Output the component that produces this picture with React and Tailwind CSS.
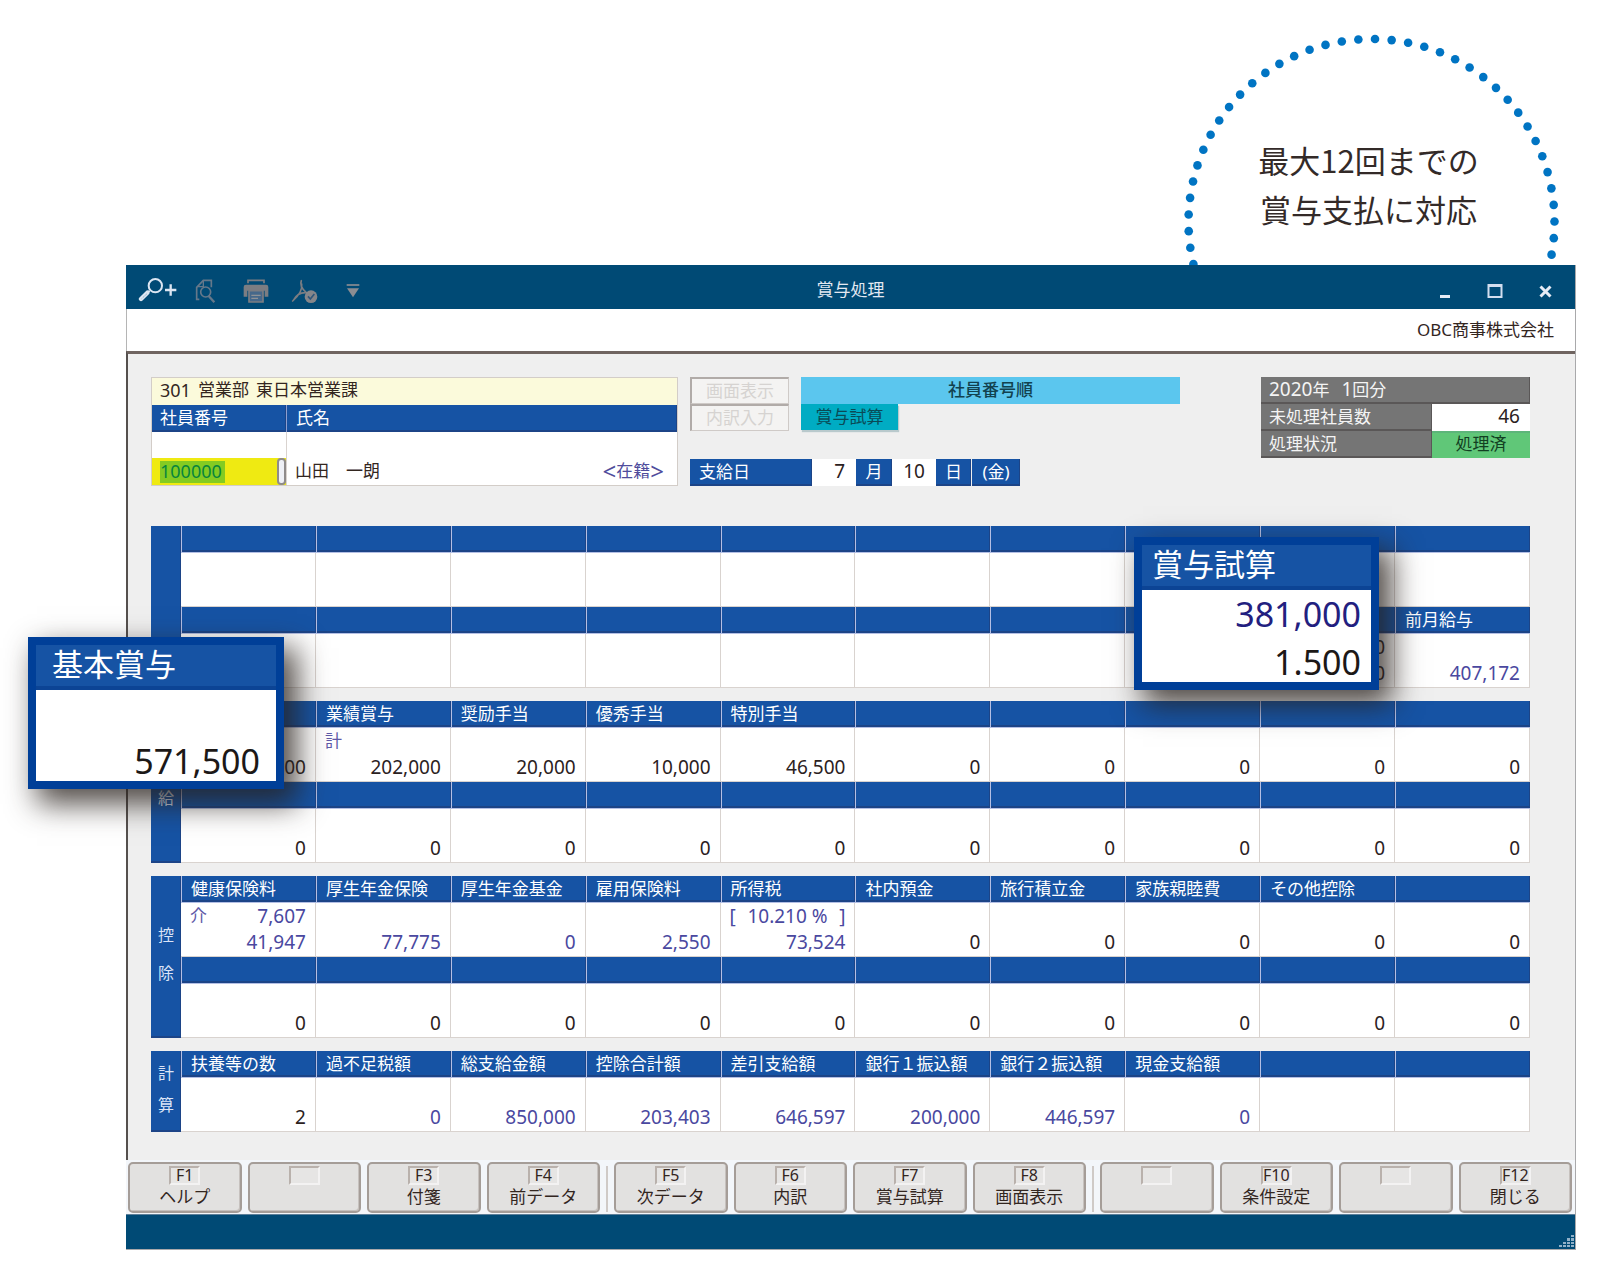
import React from "react";

const B = true;

const sections = [
  {
    side: [],
    rows: [
      { heads: Array(10).fill(""), cells: Array(10).fill({}) },
      {
        heads: ["", "", "", "", "", "", "", "", "", "前月給与"],
        cells: [...Array(8).fill({}), { top: ["", "0"], v: "0" }, { v: "407,172", b: B }],
      },
    ],
  },
  {
    side: ["", "給"],
    rows: [
      {
        heads: ["", "業績賞与", "奨励手当", "優秀手当", "特別手当", "", "", "", "", ""],
        cells: [
          { v: "00" },
          { top: ["計"], v: "202,000" },
          { v: "20,000" },
          { v: "10,000" },
          { v: "46,500" },
          ...Array(5).fill({ v: "0" }),
        ],
      },
      { heads: Array(10).fill(""), cells: Array(10).fill({ v: "0" }) },
    ],
  },
  {
    side: ["控", "除"],
    rows: [
      {
        heads: ["健康保険料", "厚生年金保険", "厚生年金基金", "雇用保険料", "所得税", "社内預金", "旅行積立金", "家族親睦費", "その他控除", ""],
        cells: [
          { top: ["介", "7,607"], v: "41,947", b: B },
          { v: "77,775", b: B },
          { v: "0", b: B },
          { v: "2,550", b: B },
          { top: ["[", "10.210 %", "]"], v: "73,524", b: B },
          ...Array(5).fill({ v: "0" }),
        ],
      },
      { heads: Array(10).fill(""), cells: Array(10).fill({ v: "0" }) },
    ],
  },
  {
    side: ["計", "算"],
    tight: true,
    rows: [
      {
        heads: ["扶養等の数", "過不足税額", "総支給金額", "控除合計額", "差引支給額", "銀行１振込額", "銀行２振込額", "現金支給額", "", ""],
        cells: [
          { v: "2" },
          { v: "0", b: B },
          { v: "850,000", b: B },
          { v: "203,403", b: B },
          { v: "646,597", b: B },
          { v: "200,000", b: B },
          { v: "446,597", b: B },
          { v: "0", b: B },
          {},
          {},
        ],
      },
    ],
  },
];

const keyGroups = [
  [["F1", "ヘルプ"], ["", ""], ["F3", "付箋"], ["F4", "前データ"]],
  [["F5", "次データ"], ["F6", "内訳"], ["F7", "賞与試算"], ["F8", "画面表示"]],
  [["", ""], ["F10", "条件設定"], ["", ""], ["F12", "閉じる"]],
];

const BLUE = "bg-[#1653a4] text-white shadow-[inset_-1px_-2px_0_#1c4487]";

function Cell({ cell }) {
  const top = cell.top || [];
  return (
    <td
      className={`h-[54px] border-r border-b border-[#d9d3cf] bg-white pr-[9px] pl-[9px] align-top text-[19px] leading-[26px] ${
        cell.b ? "text-[#4a48a0]" : "text-[#2b211e]"
      }`}
    >
      <div className="flex h-[26px] justify-between whitespace-nowrap">
        {top.map((t, i) => (
          <span key={i} className={/[計介]/.test(t) ? "text-[17px] text-[#5f5aa8]" : ""}>
            {t}
          </span>
        ))}
      </div>
      <div className="h-[27px] text-right">{cell.v}</div>
    </td>
  );
}

function Section({ section }) {
  return (
    <table className="w-full table-fixed border-separate border-spacing-0">
      <colgroup>
        <col className="w-[30px]" />
        {Array.from({ length: 10 }, (_, i) => (
          <col key={i} />
        ))}
      </colgroup>
      <tbody>
        {section.rows.map((row, r) => (
          <React.Fragment key={r}>
            <tr>
              {r === 0 && (
                <th
                  rowSpan={section.rows.length * 2}
                  scope="rowgroup"
                  className={`p-0 align-top text-[16px] font-normal ${BLUE}`}
                >
                  <div className={`flex flex-col items-center ${section.tight ? "gap-2 pt-[10px]" : "gap-[14px] pt-[47px]"}`}>
                    {section.side.map((s, i) => (
                      <span key={i} className="h-6 leading-6 text-[#dbe4f7]">
                        {s}
                      </span>
                    ))}
                  </div>
                </th>
              )}
              {row.heads.map((h, i) => (
                <th
                  key={i}
                  scope="col"
                  className={`h-[27px] border-l border-b border-[#b4bfe4] py-0 pr-0 pl-[9px] text-left text-[17px] leading-[26px] font-normal whitespace-nowrap ${BLUE}`}
                >
                  {h}
                </th>
              ))}
            </tr>
            <tr>
              {row.cells.map((c, i) => (
                <Cell key={i} cell={c} />
              ))}
            </tr>
          </React.Fragment>
        ))}
      </tbody>
    </table>
  );
}

function DottedArc() {
  const dots = Array.from({ length: 40 }, (_, i) => {
    const a = ((1.1 + (i - 20) * 5.22) * Math.PI) / 180;
    return [187.5 + 183 * Math.sin(a), 187 - 183 * Math.cos(a)];
  });
  return (
    <svg aria-hidden="true" width="376" height="236" viewBox="0 -4 376 236" className="absolute inset-0">
      {dots.map(([x, y], i) => (
        <circle key={i} cx={x} cy={y} r="4.3" fill="#0074c3" />
      ))}
    </svg>
  );
}

function ToolButton({ label, className, children, ...svg }) {
  return (
    <button type="button" aria-label={label} className={className}>
      <svg fill="none" {...svg}>
        {children}
      </svg>
    </button>
  );
}

function TitleBar() {
  return (
    <header className="grid h-11 grid-cols-[1fr_auto_1fr] items-center bg-[#004a75] text-[#e3e9f2]">
      <div className="flex items-center pt-2 pl-3">
        <ToolButton label="拡大" width="40" height="28" viewBox="52 51 120 84">
          <circle cx="104" cy="77" r="20" stroke="#dce6f2" strokeWidth="6" />
          <path d="M87 92L77 101" stroke="#dce6f2" strokeWidth="6" />
          <path d="M80 98L61 117" stroke="#dce6f2" strokeWidth="13" strokeLinecap="round" />
          <path d="M78 102L63 116" stroke="#7d9db8" strokeWidth="3" strokeDasharray="5 4" />
          <path d="M133 90h34M150 73v34" stroke="#dce6f2" strokeWidth="7" />
        </ToolButton>
        <ToolButton label="プレビュー" className="ml-4" width="22" height="26" viewBox="224 54 66 78" stroke="#65788a" strokeWidth="5">
          <path d="M276 82V61H252L232 82V118H240" />
          <path d="M252 61V80H234" strokeWidth="4" />
          <circle cx="259" cy="96" r="15" />
          <path d="M268 108L285 127" strokeWidth="7" />
        </ToolButton>
        <ToolButton label="印刷" className="ml-[26px]" width="28" height="26" viewBox="366 54 84 78">
          <path d="M384 70V61H432V70" stroke="#7b7d82" strokeWidth="5" />
          <path d="M378 74H438Q445 74 445 81V110H434V92H382V110H371V81Q371 74 378 74Z" fill="#7b7d82" />
          <path d="M387 92H429V126H387Z" fill="#46688a" stroke="#7b7d82" strokeWidth="5" />
          <path d="M394 106H422M394 115H414" stroke="#8f9296" strokeWidth="4" />
        </ToolButton>
        <ToolButton label="PDF" className="ml-[21px]" width="28" height="26" viewBox="512 54 84 78">
          <path d="M543 62C539 72 544 86 558 98C542 97 527 106 519 121M544 72C547 90 534 108 517 123" stroke="#7b7d82" strokeWidth="5" strokeLinecap="round" />
          <circle cx="572" cy="110" r="19" fill="#85868a" />
          <path d="M563 109L570 117L582 102" stroke="#31577a" strokeWidth="5" />
        </ToolButton>
        <ToolButton label="その他" className="ml-[26px]" width="16" height="16" viewBox="674 66 48 48">
          <path d="M679 72H717" stroke="#8b8d92" strokeWidth="5" />
          <path d="M680 82H716L698 109Z" fill="#8b8d92" />
        </ToolButton>
      </div>
      <h1 className="pt-[6px] text-[17px] leading-6">賞与処理</h1>
      <div className="flex items-center justify-end gap-9 pt-2 pr-[23px]">
        <ToolButton label="最小化" width="12" height="16" viewBox="0 0 12 16">
          <path d="M1 13.500h10" stroke="#e6ebf5" strokeWidth="3" />
        </ToolButton>
        <ToolButton label="最大化" width="16" height="16" viewBox="0 0 16 16">
          <path d="M1.500 2h13v12h-13z" stroke="#d3deef" strokeWidth="2" />
          <path d="M1 2.500h14" stroke="#d3deef" strokeWidth="3" />
        </ToolButton>
        <ToolButton label="閉じる" width="13" height="16" viewBox="0 0 13 16">
          <path d="M1.500 3.500l10 10M11.500 3.500l-10 10" stroke="#e6ebf5" strokeWidth="3" />
        </ToolButton>
      </div>
    </header>
  );
}

function EmployeePanel() {
  return (
    <div className="border border-[#d3cdc8] bg-white text-[17px] leading-[25px] text-[#33261f]">
      <div className="flex h-[27px] gap-[7px] bg-[#fbfadb] pl-2 leading-6">
        <span className="text-[18px]">301</span>
        <span>営業部</span>
        <span>東日本営業課</span>
      </div>
      <div className="flex">
        <div className={`h-[27px] w-[135px] border-r border-r-[#8d9fd0] pl-2 ${BLUE}`}>
          <label htmlFor="emp-no">社員番号</label>
        </div>
        <div className={`h-[27px] flex-1 pl-[9px] ${BLUE}`}>氏名</div>
      </div>
      <div className="flex h-[53px] items-end">
        <div className="flex h-full w-[135px] flex-col justify-end border-r border-[#d9d3cf]">
          <div className="flex h-[27px] items-center justify-between bg-[#efea12] pl-2">
            <input
              id="emp-no"
              defaultValue="100000"
              className="h-[22px] w-[65px] bg-[#84cb22] pb-[2px] text-[18px] leading-5 text-[#08853d] outline-none"
            />
            <button type="button" aria-label="検索" className="h-[27px] w-[9px] rounded-[4px] border-2 border-[#8f8b8b] bg-[#eef0f6]" />
          </div>
        </div>
        <div className="flex h-[27px] flex-1 justify-between pr-[13px] pl-2">
          <span>山田　一朗</span>
          <span className="flex text-[#4f4c9c]">
            <span className="text-[24px]">&lt;</span>
            在籍
            <span className="text-[24px]">&gt;</span>
          </span>
        </div>
      </div>
    </div>
  );
}

function DisabledButton({ children }) {
  return (
    <button
      type="button"
      disabled
      className="h-[27px] w-[99px] border border-t-2 border-l-2 border-[#cfcac7] border-t-[#b1aba8] border-l-[#b1aba8] bg-[#f4f3f2] text-[17px] leading-[22px] text-[#d6d3d1]"
    >
      {children}
    </button>
  );
}

function DatePanel() {
  return (
    <div className="flex flex-col justify-between">
      <div>
        <div className="flex gap-3">
          <DisabledButton>画面表示</DisabledButton>
          <div className="h-[27px] w-[379px] bg-[#5bc6ee] text-center text-[17px] leading-[25px] font-medium text-[#12424f]">社員番号順</div>
        </div>
        <div className="flex gap-3">
          <DisabledButton>内訳入力</DisabledButton>
          <button type="button" className="h-[26px] w-[97px] bg-[#00acc3] text-[17px] leading-[24px] text-[#0a4a55] shadow-[1px_2px_1px_#b9c9cc]">
            賞与試算
          </button>
        </div>
      </div>
      <div className="flex h-[27px] text-[17px] leading-[25px]">
        <div className={`w-[122px] pl-[9px] ${BLUE}`}>支給日</div>
        <input aria-label="月" defaultValue="7" className="w-11 bg-white pr-[11px] pb-[2px] text-right text-[19px] text-[#2b211e]" />
        <div className={`w-9 text-center ${BLUE}`}>月</div>
        <input aria-label="日" defaultValue="10" className="w-11 bg-white pr-[11px] pb-[2px] text-right text-[19px] text-[#2b211e]" />
        <div className={`w-[35px] text-center ${BLUE}`}>日</div>
        <div className={`ml-px w-12 text-center ${BLUE}`}>(金)</div>
      </div>
    </div>
  );
}

function StatusPanel() {
  const grey = "bg-[#757575] text-[#f4f4f4] shadow-[inset_-1px_-2px_0_#5a5757]";
  return (
    <dl className="grid grid-cols-[171fr_98fr] grid-rows-[27px_27px_27px] content-start text-[17px] leading-[25px]">
      <div className={`flex col-span-2 pl-2 ${grey}`}>
        <span className="text-[19px]">2020</span>年<span className="pl-3 text-[19px]">1</span>回分
      </div>
      <dt className={`pl-2 ${grey}`}>未処理社員数</dt>
      <dd className="bg-white pr-[10px] text-right text-[19px] text-[#2b211e]">46</dd>
      <dt className={`pl-2 ${grey}`}>処理状況</dt>
      <dd className="border-t-2 border-[#5db57a] bg-[#60c778] text-center leading-[21px] text-[#123f22]">処理済</dd>
    </dl>
  );
}

function FunctionKey({ code, label }) {
  return (
    <button
      type="button"
      className="flex h-[51px] min-w-0 flex-1 flex-col items-center rounded-[5px] border-2 border-[#a59d98] bg-[#e2e1e0] pt-[2px] text-[#33261f] shadow-[inset_-1px_-1px_0_#c6c1be]"
    >
      <span className="h-[19px] min-w-[31px] border-2 border-t-[#b9b1ac] border-r-[#f3f2f2] border-b-[#f3f2f2] border-l-[#b9b1ac] bg-[#e6e5e4] text-[16px] leading-[14px]">
        {code}
      </span>
      <span className="text-[17px] leading-6 whitespace-nowrap">{label}</span>
    </button>
  );
}

function Callout({ title, className, children }) {
  return (
    <div
      className={`absolute flex flex-col border-8 border-[#003f98] bg-white shadow-[11px_13px_28px_2px_rgba(40,32,28,0.8)] ${className}`}
    >
      <div className="h-[45px] border-b-4 border-[#0c4495] bg-[#1653a4] text-[31px] leading-[38px] text-white">{title}</div>
      <div className="flex flex-1 flex-col justify-end gap-2 text-right text-[34px] leading-10">{children}</div>
    </div>
  );
}

export default function App() {
  return (
    <main className="min-h-screen bg-white pr-[27px] pl-[126px] font-['Noto_Sans','Noto_Sans_CJK_JP',sans-serif]">
      <div className="flex h-[265px] justify-end pt-[31px] pr-[16px]">
        <div className="relative w-[376px] overflow-hidden pt-[104px]">
          <DottedArc />
          <p className="relative pr-[7px] text-center font-['Noto_Sans_CJK_JP',sans-serif] text-[31px] leading-[49px] text-[#332a28]">
            最大12回までの
            <br />
            賞与支払に対応
          </p>
        </div>
      </div>

      <div className="relative">
        <div className="border-r border-b border-[#a9a9ab] bg-[#efefef]">
          <TitleBar />
          <div className="h-[42px] border-l border-[#b5b5b5] bg-white pr-[21px] text-right text-[17px] leading-[42px] text-[#33261f]">OBC商事株式会社</div>
          <div className="border-t-[3px] border-l-2 border-t-[#6f6460] border-l-[#55504e] pr-[45px] pb-7 pl-[23px]">
            <div className="grid grid-cols-[527fr_559fr_269fr] gap-3 pt-[23px]">
              <EmployeePanel />
              <DatePanel />
              <StatusPanel />
            </div>
            <div className="mt-10 flex flex-col gap-[13px]">
              {sections.map((s, i) => (
                <Section key={i} section={s} />
              ))}
            </div>
          </div>

          <nav aria-label="ファンクションキー" className="flex h-[54px] gap-[14px] bg-[#f3f6fa] pt-[2px] pr-[3px] pl-[2px]">
            {keyGroups.map((g, i) => (
              <div key={i} className="relative flex flex-1 gap-[6px]">
                {i > 0 && <span className="absolute top-1 -left-2 h-[46px] w-[2px] bg-[#cfcac7]" />}
                {g.map(([code, label], k) => (
                  <FunctionKey key={k} code={code} label={label} />
                ))}
              </div>
            ))}
          </nav>
          <footer className="flex h-[35px] items-end justify-end border-t border-[#5d7f99] bg-[#004a75] pr-[1px] pb-[1px]">
            <svg aria-hidden="true" width="16" height="14" viewBox="0 0 16 14" fill="#8fb0c8">
              <path d="M1 11h3v2H1zM5 11h3v2H5zM9 11h3v2H9zM13 11h3v2h-3zM5 8h3v2H5zM9 8h3v2H9zM13 8h3v2h-3zM9 4h3v3H9zM13 4h3v3h-3zM13 1h3v2h-3z" />
            </svg>
          </footer>
        </div>

        <Callout title={<span className="pl-4">基本賞与</span>} className="top-[372px] -left-[98px] h-[152px] w-[256px]">
          <span className="pr-4 text-[#1c1817]">571,500</span>
        </Callout>
        <Callout title={<span className="pl-[10px]">賞与試算</span>} className="top-[272px] right-[197px] h-[153px] w-[245px]">
          <span className="pr-[10px] text-[#231f80]">381,000</span>
          <span className="pr-[10px] text-[#1c1817]">1.500</span>
        </Callout>
      </div>
    </main>
  );
}
